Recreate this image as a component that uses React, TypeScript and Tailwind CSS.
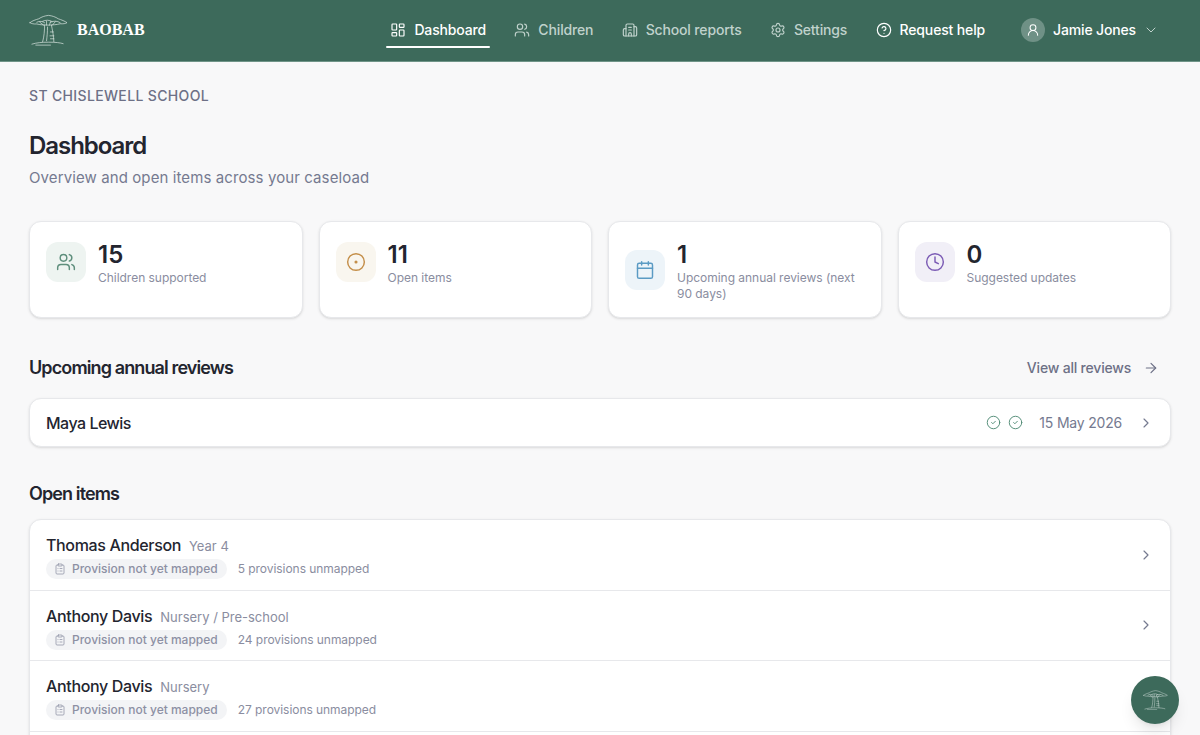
import { ArrowRight, Building2, Calendar, ChevronDown, ChevronRight, CircleCheck, CircleDot, CircleHelp, ClipboardList, Clock, LayoutDashboard, Settings, UserRound, Users } from "lucide-react";

const BaobabLogo = ({ className }: { className: string }) => (
  <svg viewBox="0 0 40 32" fill="none" stroke="currentColor" strokeWidth="0.7" strokeLinecap="round" strokeLinejoin="round" className={className}>
    <path d="M1 8.5C3 6.5 7 5.5 10 4.5C13 2.5 16 1.5 20 1C24 1.5 27 2.5 30 4.5C33 5.5 37 7 39 8.5C37.5 9.5 35 9.8 32 9.6C28 10.8 24 10.6 21 11C17 10.8 12 11 8 9.8C5 10 2.5 9.6 1 8.5Z" />
    <path d="M8 8C11 6.5 14 7 16 8.5M14 7C17 5.5 21 5.5 24 7.5M22 8C25 6.5 29 6.5 32 8.5" />
    <path d="M11 8L15 11M18 7L18 11M22 7.5L21 11M27 7.5L24 11" />
    <path d="M16 11C16 16 15.5 23 14 28M23 11C24 16 25.5 23 25.5 28" />
    <path d="M19 13C19 18 18.5 23 18 27M22 18L25 18M21.5 22L25.5 22M22 25L25.5 25" />
    <path d="M3 30.5C8 29 13 28.5 20 28.5C27 28.5 32 29 35 30M7 31.5H22" />
  </svg>
);

const navItems = [
  { label: "Dashboard", icon: LayoutDashboard, tone: "text-white", active: true },
  { label: "Children", icon: Users, tone: "text-[#c0d2cc]", active: false },
  { label: "School reports", icon: Building2, tone: "text-[#c0d2cc]", active: false },
  { label: "Settings", icon: Settings, tone: "text-[#c0d2cc]", active: false },
  { label: "Request help", icon: CircleHelp, tone: "text-white", active: false },
];

const stats = [
  { value: "15", label: "Children supported", icon: Users, box: "bg-[#eef4f1]", tint: "text-[#5f8f7d]" },
  { value: "11", label: "Open items", icon: CircleDot, box: "bg-[#f9f6ef]", tint: "text-[#c48f4a]" },
  { value: "1", label: "Upcoming annual reviews (next 90 days)", icon: Calendar, box: "bg-[#edf4f9]", tint: "text-[#5b9bc4]" },
  { value: "0", label: "Suggested updates", icon: Clock, box: "bg-[#f1eff7]", tint: "text-[#7c5cb5]" },
];

const openItems = [
  { name: "Thomas Anderson", year: "Year 4", count: "5 provisions unmapped" },
  { name: "Anthony Davis", year: "Nursery / Pre-school", count: "24 provisions unmapped" },
  { name: "Anthony Davis", year: "Nursery", count: "27 provisions unmapped" },
];

export default function App() {
  return (
    <div className="h-screen overflow-hidden bg-[#f8f8f9] font-['Inter',sans-serif] text-[#23252f]">
      <header className="flex h-[62px] items-center justify-between border-b border-[#6f9488] bg-[#3d6a5b] pb-px pl-[29px] pr-[41px]">
        <div className="flex items-center gap-[9px] text-white">
          <BaobabLogo className="h-[32px] w-[39px] text-[#dfe9e5]" />
          <span className="font-['Liberation_Serif',serif] text-[16px] font-bold">BAOBAB</span>
        </div>
        <div className="flex items-center">
          <nav className="flex items-center gap-[20.3px]">
            {navItems.map((item) => (
              <a key={item.label} className={`relative flex h-[36px] items-center gap-2 px-1 text-sm font-medium tracking-[-0.15px] ${item.tone}`}>
                <item.icon size={16} strokeWidth={1.75} />
                {item.label}
                {item.active && <span className="absolute inset-x-0 bottom-0 h-[2px] rounded-full bg-white" />}
              </a>
            ))}
          </nav>
          <div className="ml-8 flex items-center text-sm font-medium tracking-[-0.15px] text-white">
            <span className="flex h-6 w-6 items-center justify-center rounded-full bg-[#6f9186]">
              <UserRound size={14} strokeWidth={1.75} />
            </span>
            <span className="ml-2">Jamie Jones</span>
            <ChevronDown size={16} strokeWidth={1.5} className="ml-[7px] text-[#c0d2cc]" />
          </div>
        </div>
      </header>

      <main className="px-[29px] pt-[24px]">
        <p className="text-sm font-medium leading-[20px] tracking-[0.35px] text-[#6d7086]">ST CHISLEWELL SCHOOL</p>
        <h1 className="mt-[24px] text-2xl font-semibold leading-[32px] tracking-[-1.05px]">Dashboard</h1>
        <p className="mt-[4px] text-[15px] leading-[24px] tracking-[0.1px] text-[#757a90]">Overview and open items across your caseload</p>

        <section className="mt-[31px] grid grid-cols-4 gap-4">
          {stats.map((stat) => (
            <div key={stat.label} className="flex h-[97px] items-start rounded-xl border border-[#e7e8eb] bg-white p-4 shadow-sm">
              <div className="flex items-center gap-3">
                <span className={`flex h-10 w-10 shrink-0 items-center justify-center rounded-xl ${stat.box} ${stat.tint}`}>
                  <stat.icon size={20} strokeWidth={1.75} />
                </span>
                <div>
                  <p className="text-2xl font-semibold leading-[34px]">{stat.value}</p>
                  <p className="-mt-[2px] text-xs leading-[16px] tracking-[-0.03px] text-[#8a8da0]">{stat.label}</p>
                </div>
              </div>
            </div>
          ))}
        </section>

        <section className="mt-[36px]">
          <div className="flex items-center justify-between pr-[12px]">
            <h2 className="text-lg font-semibold leading-[28px] tracking-[-0.88px]">Upcoming annual reviews</h2>
            <a className="flex items-center gap-3 text-sm font-medium tracking-[-0.2px] text-[#6d7086]">
              View all reviews
              <ArrowRight size={16} strokeWidth={1.75} />
            </a>
          </div>
          <div className="mt-[16px] flex h-[49px] items-center justify-between rounded-xl border border-[#e7e8eb] bg-white pl-4 pr-4 shadow-sm">
            <span className="text-base font-medium tracking-[-0.5px]">Maya Lewis</span>
            <div className="flex items-center">
              <CircleCheck size={15} strokeWidth={1.5} className="text-[#4f8a74]" />
              <CircleCheck size={15} strokeWidth={1.5} className="ml-[7px] text-[#4f8a74]" />
              <span className="ml-4 text-sm tracking-[-0.2px] text-[#757a90]">15 May 2026</span>
              <ChevronRight size={16} strokeWidth={1.75} className="ml-4 text-[#757a90]" />
            </div>
          </div>
        </section>

        <section className="mt-[33px]">
          <h2 className="text-lg font-semibold leading-[28px] tracking-[-0.88px]">Open items</h2>
          <div className="mt-[11px] rounded-xl border border-[#e7e8eb] bg-white shadow-sm">
            {openItems.map((item, i) => (
              <div key={i} className="flex h-[70.5px] items-center justify-between border-b border-[#e7e8eb] pl-4 pr-4">
                <div className="pt-[3px]">
                  <div className="flex items-baseline gap-2">
                    <span className="text-base font-medium leading-[24px] tracking-[-0.35px]">{item.name}</span>
                    <span className="text-[13px] text-[#8a8da0]">{item.year}</span>
                  </div>
                  <div className="mt-[2px] flex items-center gap-[11px]">
                    <span className="flex h-[20px] items-center gap-[6px] rounded-full bg-[#f3f4f6] pl-2 pr-[9px] text-xs font-medium text-[#8d90a4]">
                      <ClipboardList size={12} strokeWidth={1.5} />
                      Provision not yet mapped
                    </span>
                    <span className="text-xs tracking-[-0.05px] text-[#8a8da0]">{item.count}</span>
                  </div>
                </div>
                <ChevronRight size={16} strokeWidth={1.75} className="text-[#757a90]" />
              </div>
            ))}
            <div className="h-[70px]" />
          </div>
        </section>
      </main>

      <button className="fixed bottom-[11px] right-[21px] flex h-12 w-12 items-center justify-center rounded-full bg-[#3d6a5b] shadow-lg">
        <BaobabLogo className="h-[20px] w-[25px] text-[#dfe9e5]" />
      </button>
    </div>
  );
}
